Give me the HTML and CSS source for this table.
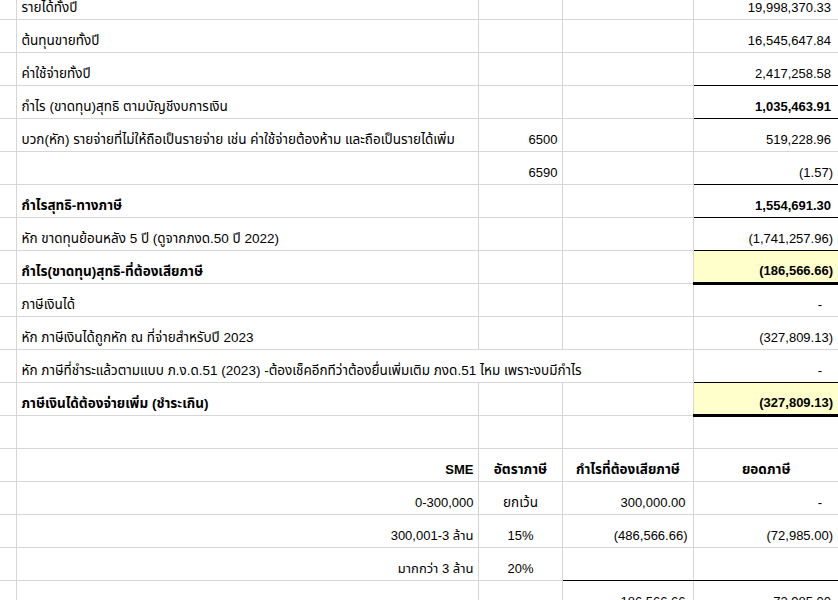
FILE: index.html
```html
<!DOCTYPE html>
<html lang="th">
<head>
<meta charset="utf-8">
<title>Tax sheet</title>
<link rel="stylesheet" href="styles.css">
</head>
<body>
<table class="sheet">
  <colgroup>
    <col class="ca"><col class="cb"><col class="cc"><col class="cd"><col class="ce">
  </colgroup>
  <tbody>
    <tr><td></td><td class="t">รายได้ทั้งปี</td><td></td><td></td><td class="n pos">19,998,370.33</td></tr>
    <tr><td></td><td class="t">ต้นทุนขายทั้งปี</td><td></td><td></td><td class="n pos">16,545,647.84</td></tr>
    <tr><td></td><td class="t">ค่าใช้จ่ายทั้งปี</td><td></td><td></td><td class="n pos bb">2,417,258.58</td></tr>
    <tr><td></td><td class="t">กำไร (ขาดทุน)สุทธิ ตามบัญชีงบการเงิน</td><td></td><td></td><td class="n pos b bb">1,035,463.91</td></tr>
    <tr><td></td><td class="t">บวก(หัก) รายจ่ายที่ไม่ให้ถือเป็นรายจ่าย เช่น ค่าใช้จ่ายต้องห้าม และถือเป็นรายได้เพิ่ม</td><td class="n code">6500</td><td></td><td class="n pos">519,228.96</td></tr>
    <tr><td></td><td></td><td class="n code">6590</td><td></td><td class="n neg bb">(1.57)</td></tr>
    <tr><td></td><td class="t b lbl">กำไรสุทธิ-ทางภาษี</td><td></td><td></td><td class="n pos b bb">1,554,691.30</td></tr>
    <tr><td></td><td class="t lbl">หัก ขาดทุนย้อนหลัง 5 ปี (ดูจากภงด.50 ปี 2022)</td><td></td><td></td><td class="n neg bb">(1,741,257.96)</td></tr>
    <tr><td></td><td class="t b lbl">กำไร(ขาดทุน)สุทธิ-ที่ต้องเสียภาษี</td><td></td><td></td><td class="n neg b hl bbt">(186,566.66)</td></tr>
    <tr><td></td><td class="t lbl">ภาษีเงินได้</td><td></td><td></td><td class="n dash">-</td></tr>
    <tr><td></td><td class="t lbl">หัก ภาษีเงินได้ถูกหัก ณ ที่จ่ายสำหรับปี 2023</td><td></td><td></td><td class="n neg">(327,809.13)</td></tr>
    <tr><td></td><td class="t lbl" colspan="3">หัก ภาษีที่ชำระแล้วตามแบบ ภ.ง.ด.51 (2023) -ต้องเช็คอีกทีว่าต้องยื่นเพิ่มเติม ภงด.51 ไหม เพราะงบมีกำไร</td><td class="n dash bb">-</td></tr>
    <tr><td></td><td class="t b lbl">ภาษีเงินได้ต้องจ่ายเพิ่ม (ชำระเกิน)</td><td></td><td></td><td class="n neg b hl bbt">(327,809.13)</td></tr>
    <tr><td></td><td></td><td></td><td></td><td></td></tr>
    <tr><td></td><td class="n b code">SME</td><td class="t ctr b">อัตราภาษี</td><td class="t ctr b">กำไรที่ต้องเสียภาษี</td><td class="t ctr b">ยอดภาษี</td></tr>
    <tr><td></td><td class="n code">0-300,000</td><td class="t ctr">ยกเว้น</td><td class="n pos">300,000.00</td><td class="n dash">-</td></tr>
    <tr><td></td><td class="n code">300,001-3 ล้าน</td><td class="ctr">15%</td><td class="n neg">(486,566.66)</td><td class="n neg">(72,985.00)</td></tr>
    <tr><td></td><td class="n code">มากกว่า 3 ล้าน</td><td class="ctr">20%</td><td class="bb"></td><td class="bb"></td></tr>
    <tr><td></td><td></td><td></td><td class="n pos">186,566.66</td><td class="n pos">72,985.00</td></tr>
  </tbody>
</table>
</body>
</html>
```

FILE: styles.css
```css
html, body {
  margin: 0;
  padding: 0;
  background: #ffffff;
  overflow: hidden;
}

body {
  font-family: "Liberation Sans", Arial, "Noto Sans Thai", Tahoma, sans-serif;
  font-size: 13px;
  color: #000000;
}

.sheet {
  border-collapse: collapse;
  table-layout: fixed;
  width: 838px;
  margin-top: -14px;
}

.ca { width: 16px; }
.cb { width: 462px; }
.cc { width: 84px; }
.cd { width: 131px; }
.ce { width: 145px; }

.sheet tr {
  height: 33px;
}

.sheet td {
  border: 1px solid #d6d6d6;
  padding: 0 4px 3px 5px;
  line-height: 16px;
  vertical-align: bottom;
  white-space: nowrap;
  overflow: visible;
}

.sheet td:first-child {
  border-left: none;
}

.sheet td:last-child {
  border-right: none;
}

.t { font-size: 13.5px; }

.n { text-align: right; }
.ctr { text-align: center; }
.b { font-weight: bold; }

.lbl { padding-left: 7px; }

.code { padding-right: 4px; }

.sheet td.pos { padding-right: 7px; }
.sheet td.neg { padding-right: 5px; }
.sheet td.dash { padding-right: 16px; }

.hl { background: #ffffcc; }

.sheet td.bb { border-bottom: 1px solid #000000; }
.sheet td.bbt { border-bottom: 3px solid #000000; }
```
